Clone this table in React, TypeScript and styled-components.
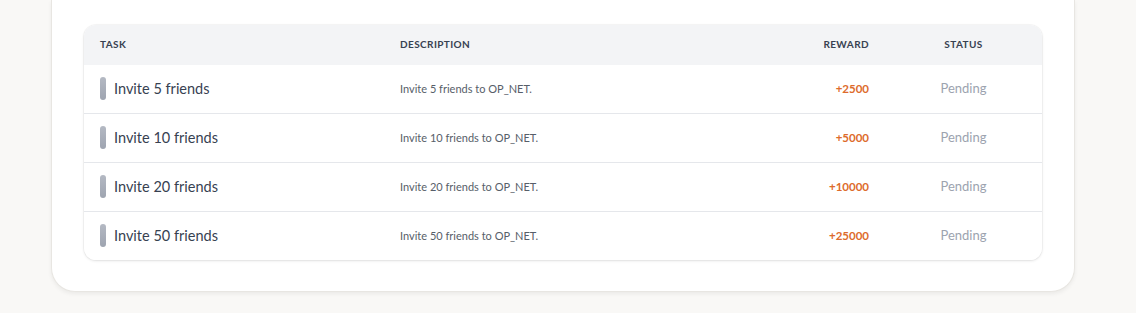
import React from "react";
import styled, { createGlobalStyle } from "styled-components";

const GlobalStyle = createGlobalStyle`
  html, body {
    margin: 0;
    padding: 0;
    background: #f9f8f6;
    font-family: "Lato", "Open Sans", sans-serif;
  }
`;

const Page = styled.div`
  padding: 0 61px 20px 51px;
  width: 1136px;
  box-sizing: border-box;
`;

const Panel = styled.div`
  background: #ffffff;
  border: 1px solid #e8e6e2;
  border-top: none;
  border-radius: 0 0 24px 24px;
  box-shadow: 0 2px 4px rgba(0, 0, 0, 0.06);
  padding: 25px 32px 31px 32px;
`;

const Table = styled.div`
  border-radius: 12px;
  background: #ffffff;
  box-shadow: 0 1px 3px rgba(0, 0, 0, 0.1), 0 0 0 1px rgba(0, 0, 0, 0.03);
  overflow: hidden;
`;

const Row = styled.div<{ header?: boolean; last?: boolean }>`
  display: grid;
  grid-template-columns: 300px 1fr 120px 157px;
  align-items: center;
  box-sizing: border-box;
  padding-bottom: 2px;
  height: ${(p) => (p.header ? "40px" : p.last ? "48px" : "49px")};
  background: ${(p) => (p.header ? "#f3f4f6" : "#ffffff")};
  border-bottom: ${(p) => (p.header || p.last ? "none" : "1px solid #e5e7eb")};
`;

const Head = styled.div<{ align?: string }>`
  padding: 0 16px;
  font-size: 10px;
  font-weight: 700;
  letter-spacing: 0.4px;
  text-transform: uppercase;
  color: #374151;
  text-align: ${(p) => p.align || "left"};
`;

const TaskCell = styled.div`
  padding: 0 16px;
  display: flex;
  align-items: center;
  gap: 8px;
`;

const Bar = styled.span`
  width: 6px;
  height: 23px;
  border-radius: 3px;
  background: linear-gradient(180deg, #b4b9c3 0%, #9ea4b0 100%);
`;

const TaskName = styled.span`
  font-size: 14.5px;
  color: #374151;
`;

const Desc = styled.div`
  padding: 0 16px;
  font-size: 11px;
  color: #575e69;
`;

const Reward = styled.div`
  padding: 0 16px;
  text-align: right;
  font-size: 11.5px;
  font-weight: 700;
  color: #dd6b2c;
`;

const Status = styled.div`
  padding: 0 16px;
  text-align: center;
  font-size: 13px;
  color: #9ca3af;
`;

const tasks = [
  { n: 5, reward: 2500 },
  { n: 10, reward: 5000 },
  { n: 20, reward: 10000 },
  { n: 50, reward: 25000 },
];

export default function App() {
  return (
    <>
      <GlobalStyle />
      <Page>
        <Panel>
          <Table>
            <Row header>
              <Head>Task</Head>
              <Head>Description</Head>
              <Head align="right">Reward</Head>
              <Head align="center">Status</Head>
            </Row>
            {tasks.map((t, i) => (
              <Row key={t.n} last={i === tasks.length - 1}>
                <TaskCell>
                  <Bar />
                  <TaskName>Invite {t.n} friends</TaskName>
                </TaskCell>
                <Desc>Invite {t.n} friends to OP_NET.</Desc>
                <Reward>+{t.reward}</Reward>
                <Status>Pending</Status>
              </Row>
            ))}
          </Table>
        </Panel>
      </Page>
    </>
  );
}
